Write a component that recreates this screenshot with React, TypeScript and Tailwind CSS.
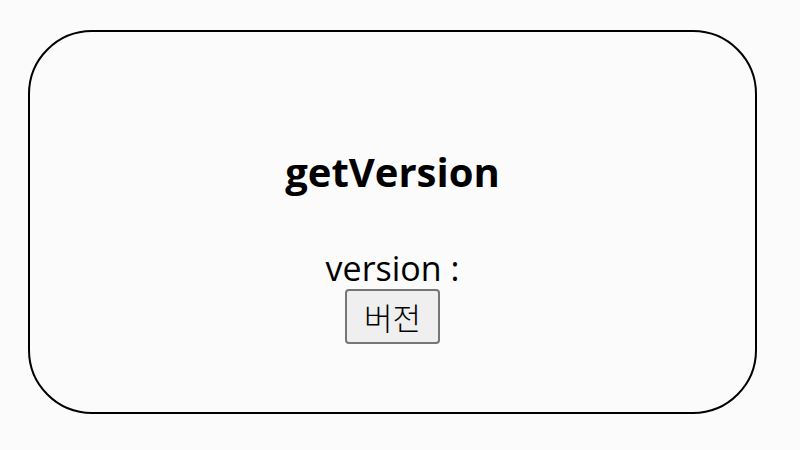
export default function App() {
  return (
    <div className="w-[800px] h-[450px] bg-[#fcfbfc] pt-[30px] pl-[28px]" style={{ fontFamily: '"Open Sans", "Noto Sans CJK KR", sans-serif' }}>
      <div className="w-[729px] h-[384px] border-2 border-black rounded-[64px] flex flex-col items-center pt-[116px]">
        <h1 className="text-[40px] font-bold leading-[48px] text-black">getVersion</h1>
        <div className="text-[34px] leading-[40px] text-black mt-[52px]">version :</div>
        <button className="mt-[1px] h-[55px] px-[17px] text-[31px] font-light leading-none bg-[#efefef] border-2 border-[#767676] rounded-[4px] text-black" style={{ fontFamily: '"Noto Sans CJK KR", sans-serif' }}>버전</button>
      </div>
    </div>
  );
}
